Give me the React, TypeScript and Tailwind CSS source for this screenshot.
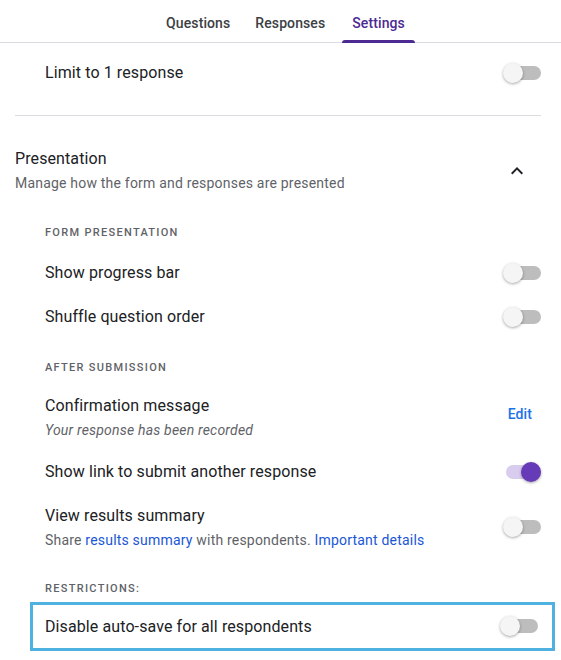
import React from 'react';

function Toggle({ on = false }: { on?: boolean }) {
  return (
    <div className="relative w-[38px] h-[20px] flex items-center shrink-0">
      <div className={`absolute left-[3px] right-0 h-[14px] rounded-full ${on ? 'bg-[#d8cdef]' : 'bg-[#bdbdbd]'}`} />
      <div
        className={`absolute top-0 w-[20px] h-[20px] rounded-full shadow-[0_1px_3px_rgba(0,0,0,0.35)] ${
          on ? 'right-0 bg-[#673ab7]' : 'left-0 bg-[#f5f5f5]'
        }`}
      />
    </div>
  );
}

function SectionLabel({ children }: { children: React.ReactNode }) {
  return (
    <div className="text-[11px] font-medium tracking-[1.3px] text-[#5f6368] uppercase">{children}</div>
  );
}

export default function App() {
  return (
    <div className="w-[561px] h-[660px] bg-white overflow-hidden font-['Roboto',sans-serif] text-[#202124] tracking-[0.1px]">
      {/* tabs */}
      <div className="h-[43px] border-b border-[#dadce0] flex justify-center items-stretch pl-[12px]">
        <div className="flex gap-[9px]">
          <div className="px-[8px] pt-[5px] flex items-center text-[14px] font-medium text-[#3c4043]">Questions</div>
          <div className="px-[8px] pt-[5px] flex items-center text-[14px] font-medium text-[#3c4043]">Responses</div>
          <div className="relative px-[10px] pt-[5px] flex items-center text-[14px] font-medium text-[#4c2a92]">
            Settings
            <div className="absolute left-0 right-0 bottom-[-1px] h-[3px] rounded-t-[3px] bg-[#4c2a92]" />
          </div>
        </div>
      </div>

      {/* limit */}
      <div className="pl-[45px] pr-[20px] h-[60px] flex items-center justify-between">
        <span className="text-[16px]">Limit to 1 response</span>
        <Toggle />
      </div>

      <div className="mx-[15px] mr-[20px] mt-[12px] border-t border-[#dadce0]" />

      {/* presentation */}
      <div className="pl-[15px] pr-[32px] pt-[32px] flex items-center justify-between">
        <div>
          <div className="text-[16px] leading-[22px]">Presentation</div>
          <div className="text-[14px] leading-[20px] mt-[3px] text-[#5f6368] tracking-[0.2px]">
            Manage how the form and responses are presented
          </div>
        </div>
        <svg width="24" height="24" viewBox="0 0 24 24">
          <path d="M7.41 15.41 12 10.83l4.59 4.58L18 14l-6-6-6 6z" fill="#202124" />
        </svg>
      </div>

      <div className="pl-[45px] pr-[20px]">
        <div className="pt-[32px] pb-[9px]">
          <SectionLabel>Form presentation</SectionLabel>
        </div>
        <div className="h-[44px] flex items-center justify-between">
          <span className="text-[16px]">Show progress bar</span>
          <Toggle />
        </div>
        <div className="h-[44px] flex items-center justify-between">
          <span className="text-[16px]">Shuffle question order</span>
          <Toggle />
        </div>

        <div className="pt-[21px] pb-[15px]">
          <SectionLabel>After submission</SectionLabel>
        </div>
        <div className="flex items-start justify-between pt-[3px] pb-[5px]">
          <div>
            <div className="text-[16px] leading-[24px]">Confirmation message</div>
            <div className="text-[14px] leading-[20px] italic text-[#5f6368] mt-[2px] tracking-[0.2px]">
              Your response has been recorded
            </div>
          </div>
          <span className="text-[14px] font-medium text-[#1a73e8] mr-[9px] pt-[10px]">Edit</span>
        </div>
        <div className="h-[44px] mt-[5px] flex items-center justify-between">
          <span className="text-[16px]">Show link to submit another response</span>
          <Toggle on />
        </div>
        <div className="flex items-center justify-between pt-[10px]">
          <div>
            <div className="text-[16px] leading-[24px]">View results summary</div>
            <div className="text-[14px] leading-[20px] text-[#5f6368] mt-[2px] tracking-[0.2px]">
              Share <span className="text-[#1a56d6]">results summary</span> with respondents.{' '}
              <span className="text-[#1a56d6]">Important details</span>
            </div>
          </div>
          <Toggle />
        </div>

        <div className="pt-[31px] pb-[4px]">
          <SectionLabel>Restrictions:</SectionLabel>
        </div>
      </div>

      <div className="ml-[30px] mr-[6px] h-[49px] border-[3px] border-[#4eb1df] pl-[12px] pr-[14px] flex items-center justify-between">
        <span className="text-[16px] mt-[2px]">Disable auto-save for all respondents</span>
        <Toggle />
      </div>
    </div>
  );
}
